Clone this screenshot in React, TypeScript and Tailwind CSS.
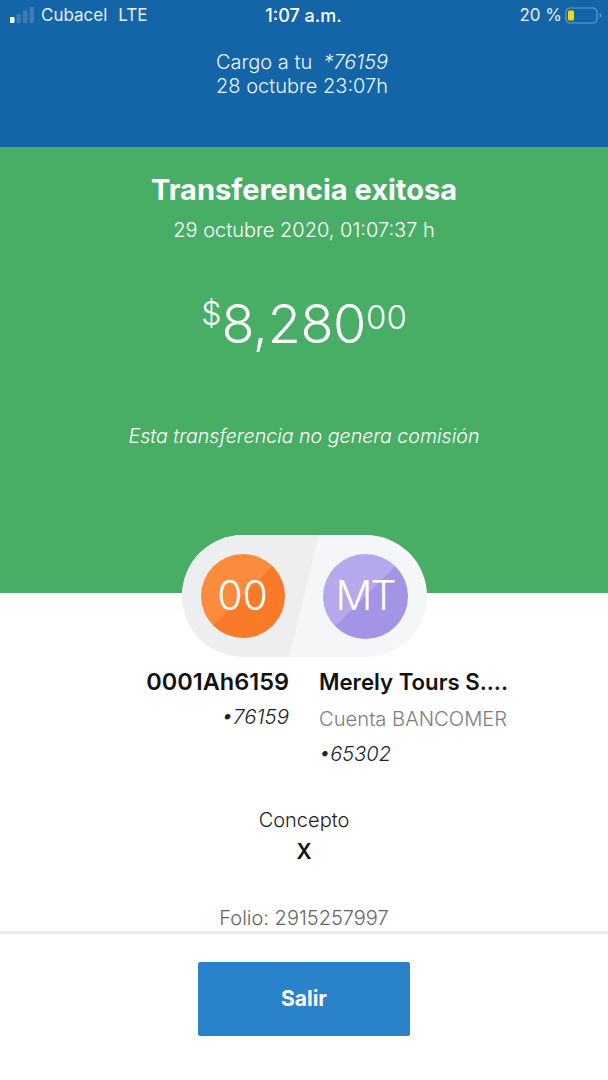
import React from "react";

function Signal() {
  return (
    <svg width="24" height="17" viewBox="0 0 24 17" className="block">
      <rect x="0" y="10" width="4.5" height="6" rx="1" fill="#ffffff" />
      <rect x="6.5" y="7" width="4.5" height="9" rx="1" fill="#3f7cb2" />
      <rect x="13" y="3.5" width="4.5" height="12.5" rx="1" fill="#3f7cb2" />
      <rect x="19.5" y="0" width="4.5" height="16" rx="1" fill="#3f7cb2" />
    </svg>
  );
}

function Battery() {
  return (
    <svg width="37" height="18" viewBox="0 0 37 18" className="block">
      <rect x="1" y="1" width="31" height="15" rx="4" fill="none" stroke="#6a9cc8" strokeWidth="1.2" />
      <rect x="3" y="3.5" width="6" height="10" rx="1.5" fill="#f7d913" />
      <path d="M34.5 6.5 C36 7.5 36 9.5 34.5 10.5" fill="none" stroke="#6a9cc8" strokeWidth="1.2" />
    </svg>
  );
}

export default function App() {
  return (
    <div className="w-[608px] h-[1080px] bg-white flex flex-col overflow-hidden font-['Inter','Liberation_Sans',sans-serif]">
      <header className="h-[147px] bg-[#1464a8] text-white flex flex-col shrink-0">
        <div className="h-[31px] pl-[10px] pr-[6px] grid grid-cols-3 items-center text-[17px] text-[#e4f0fa]">
          <div className="flex items-center">
            <Signal />
            <span className="ml-[7px]">Cubacel</span>
            <span className="ml-[11px]">LTE</span>
          </div>
          <div className="text-center font-medium text-[18px] text-white pr-[5px]">1:07 a.m.</div>
          <div className="flex items-center justify-end">
            <span className="mr-[3px]">20 %</span>
            <Battery />
          </div>
        </div>
        <div className="mt-[19px] pr-[4px] text-center text-[20px] leading-[24px] font-light text-[#eef5fb]">
          <p>
            Cargo a tu&nbsp; <em>*76159</em>
          </p>
          <p>28 octubre 23:07h</p>
        </div>
      </header>

      <section className="h-[446px] bg-[#49ae65] text-white flex flex-col items-center shrink-0">
        <h1 className="mt-[25px] text-[29px] leading-[36px] font-bold">Transferencia exitosa</h1>
        <p className="mt-[9px] text-[20px] leading-[26px] font-light">29 octubre 2020, 01:07:37 h</p>
        <p className="mt-[51px] flex items-start font-light leading-none">
          <span className="text-[32px] mt-[4px]">$</span>
          <span className="text-[54px] leading-[60px] tracking-[-0.4px]">8,280</span>
          <span className="text-[33px] mt-[7px]">00</span>
        </p>
        <p className="mt-[69px] text-[19.6px] leading-[26px] font-light italic">Esta transferencia no genera comisión</p>
      </section>

      <main className="flex-1 flex flex-col items-center">
        <div className="relative -mt-[58px] w-[245px] h-[122px] rounded-[61px] bg-[#f5f6f7] overflow-hidden flex items-center justify-between px-[19px] shrink-0">
          <div className="absolute inset-0 bg-[#edeeef] [clip-path:polygon(0_0,137px_0,108px_100%,0_100%)]" />
          <div className="relative w-[84px] h-[84px] rounded-full bg-[linear-gradient(135deg,#fb8c3e_50%,#f97b2a_50%)] flex items-center justify-center text-white text-[41px] font-light">
            00
          </div>
          <div className="relative w-[85px] h-[85px] rounded-full bg-[linear-gradient(135deg,#b5a8ec_50%,#a394e6_50%)] flex items-center justify-center text-white text-[41px] tracking-[-2px] font-light">
            MT
          </div>
        </div>

        <div className="mt-[9px] w-full grid grid-cols-[289px_1fr] gap-x-[30px]">
          <div className="text-right">
            <p className="text-[23.5px] leading-[32px] font-semibold text-[#121212]">0001Ah6159</p>
            <p className="mt-[6px] text-[20.5px] leading-[26px] font-light italic text-[#222]">•76159</p>
          </div>
          <div>
            <p className="text-[22.2px] leading-[32px] font-semibold text-[#121212]">Merely Tours S....</p>
            <p className="mt-[8px] text-[20.2px] leading-[26px] font-light text-[#7d7d7d]">Cuenta BANCOMER</p>
            <p className="mt-[9px] text-[20px] leading-[26px] font-light italic text-[#222]">•65302</p>
          </div>
        </div>

        <p className="mt-[40px] text-[20px] leading-[26px] font-light text-[#222]">Concepto</p>
        <p className="mt-[6px] text-[21px] leading-[26px] font-semibold text-[#111]">X</p>
        <p className="mt-[40px] text-[20px] leading-[26px] font-light text-[#666]">Folio: 2915257997</p>

        <footer className="w-full flex-1 border-t-[3px] border-[#ececec] flex justify-center">
          <button className="mt-[28px] w-[212px] h-[74px] rounded-[2px] bg-[#2a82cb] text-white text-[21px] font-bold">
            Salir
          </button>
        </footer>
      </main>
    </div>
  );
}
